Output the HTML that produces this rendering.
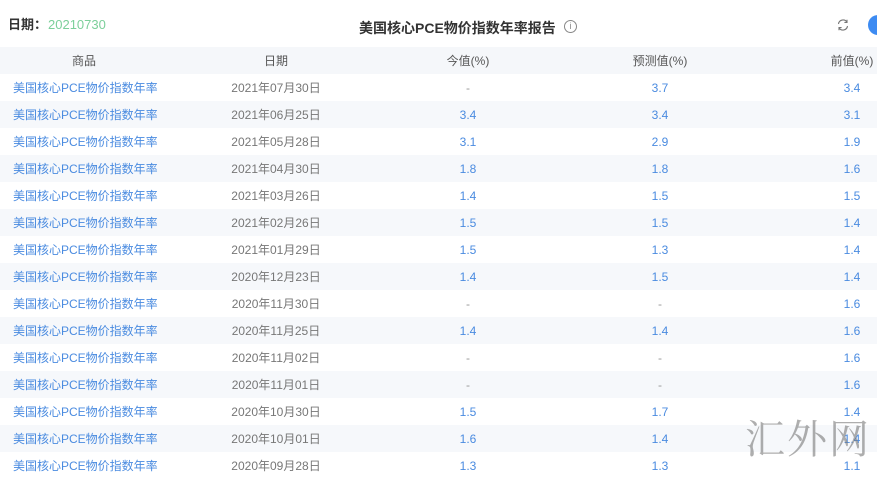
<!DOCTYPE html>
<html><head><meta charset="utf-8"><style>
*{margin:0;padding:0;box-sizing:border-box}
body{width:877px;height:465px;overflow:hidden;background:#fff;font-family:"Liberation Sans","Noto Sans CJK SC",sans-serif;font-size:12px;position:relative}
.top{position:absolute;top:0;left:0;width:877px;height:47px}
.dl{position:absolute;left:8px;top:16px;font-size:13px;line-height:18px;color:#333;font-weight:bold}
.dv{position:absolute;left:48px;top:16px;font-size:13px;line-height:18px;color:#7ccf9a}
.title{position:absolute;left:359px;top:18px;font-size:14px;font-weight:bold;color:#333}
.info{position:absolute;left:564px;top:20px;width:13px;height:13px;border:1px solid #888;border-radius:50%;font-size:9px;color:#888;text-align:center;line-height:11px}
.dot{position:absolute;left:868px;top:15px;width:20px;height:20px;border-radius:50%;background:#3d8bf2}
table{position:absolute;top:47px;left:0;border-collapse:collapse;width:936px;table-layout:fixed}
td,th{height:27px;text-align:center;font-weight:normal;color:#777;white-space:nowrap}
th{background:#f5f7fa;color:#555}
tr:nth-child(odd) td{background:#f6f8fb}
td.p{text-align:left;padding-left:13px;color:#4a8be0}
td.v{color:#4a8be0}
td.d{color:#999}
.wm{position:absolute;left:745px;top:408px;font-family:"Noto Serif CJK SC",serif;font-size:40px;color:rgba(120,120,120,.6);letter-spacing:2px}
</style></head><body>
<div class="top">
<div class="dl">日期：</div><div class="dv">20210730</div>
<div class="title">美国核心PCE物价指数年率报告</div><div class="info">i</div>
<svg style="position:absolute;left:836px;top:18px" width="14" height="14" viewBox="0 0 14 14" fill="none" stroke="#777" stroke-width="1.1"><path d="M2.5 6A4.6 4.6 0 0 1 11 4.2M11 1.8v2.6H8.4M11.5 8A4.6 4.6 0 0 1 3 9.8M3 12.2V9.6h2.6"/></svg>
<div class="dot"></div>
</div>
<table>
<colgroup><col style="width:168px"><col style="width:216px"><col style="width:168px"><col style="width:216px"><col style="width:168px"></colgroup>
<tr><th>商品</th><th>日期</th><th>今值(%)</th><th>预测值(%)</th><th>前值(%)</th></tr>
<tr><td class="p">美国核心PCE物价指数年率</td><td>2021年07月30日</td><td class="d">-</td><td class="v">3.7</td><td class="v">3.4</td></tr>
<tr><td class="p">美国核心PCE物价指数年率</td><td>2021年06月25日</td><td class="v">3.4</td><td class="v">3.4</td><td class="v">3.1</td></tr>
<tr><td class="p">美国核心PCE物价指数年率</td><td>2021年05月28日</td><td class="v">3.1</td><td class="v">2.9</td><td class="v">1.9</td></tr>
<tr><td class="p">美国核心PCE物价指数年率</td><td>2021年04月30日</td><td class="v">1.8</td><td class="v">1.8</td><td class="v">1.6</td></tr>
<tr><td class="p">美国核心PCE物价指数年率</td><td>2021年03月26日</td><td class="v">1.4</td><td class="v">1.5</td><td class="v">1.5</td></tr>
<tr><td class="p">美国核心PCE物价指数年率</td><td>2021年02月26日</td><td class="v">1.5</td><td class="v">1.5</td><td class="v">1.4</td></tr>
<tr><td class="p">美国核心PCE物价指数年率</td><td>2021年01月29日</td><td class="v">1.5</td><td class="v">1.3</td><td class="v">1.4</td></tr>
<tr><td class="p">美国核心PCE物价指数年率</td><td>2020年12月23日</td><td class="v">1.4</td><td class="v">1.5</td><td class="v">1.4</td></tr>
<tr><td class="p">美国核心PCE物价指数年率</td><td>2020年11月30日</td><td class="d">-</td><td class="d">-</td><td class="v">1.6</td></tr>
<tr><td class="p">美国核心PCE物价指数年率</td><td>2020年11月25日</td><td class="v">1.4</td><td class="v">1.4</td><td class="v">1.6</td></tr>
<tr><td class="p">美国核心PCE物价指数年率</td><td>2020年11月02日</td><td class="d">-</td><td class="d">-</td><td class="v">1.6</td></tr>
<tr><td class="p">美国核心PCE物价指数年率</td><td>2020年11月01日</td><td class="d">-</td><td class="d">-</td><td class="v">1.6</td></tr>
<tr><td class="p">美国核心PCE物价指数年率</td><td>2020年10月30日</td><td class="v">1.5</td><td class="v">1.7</td><td class="v">1.4</td></tr>
<tr><td class="p">美国核心PCE物价指数年率</td><td>2020年10月01日</td><td class="v">1.6</td><td class="v">1.4</td><td class="v">1.4</td></tr>
<tr><td class="p">美国核心PCE物价指数年率</td><td>2020年09月28日</td><td class="v">1.3</td><td class="v">1.3</td><td class="v">1.1</td></tr>
</table>
<div class="wm">汇外网</div>
</body></html>
